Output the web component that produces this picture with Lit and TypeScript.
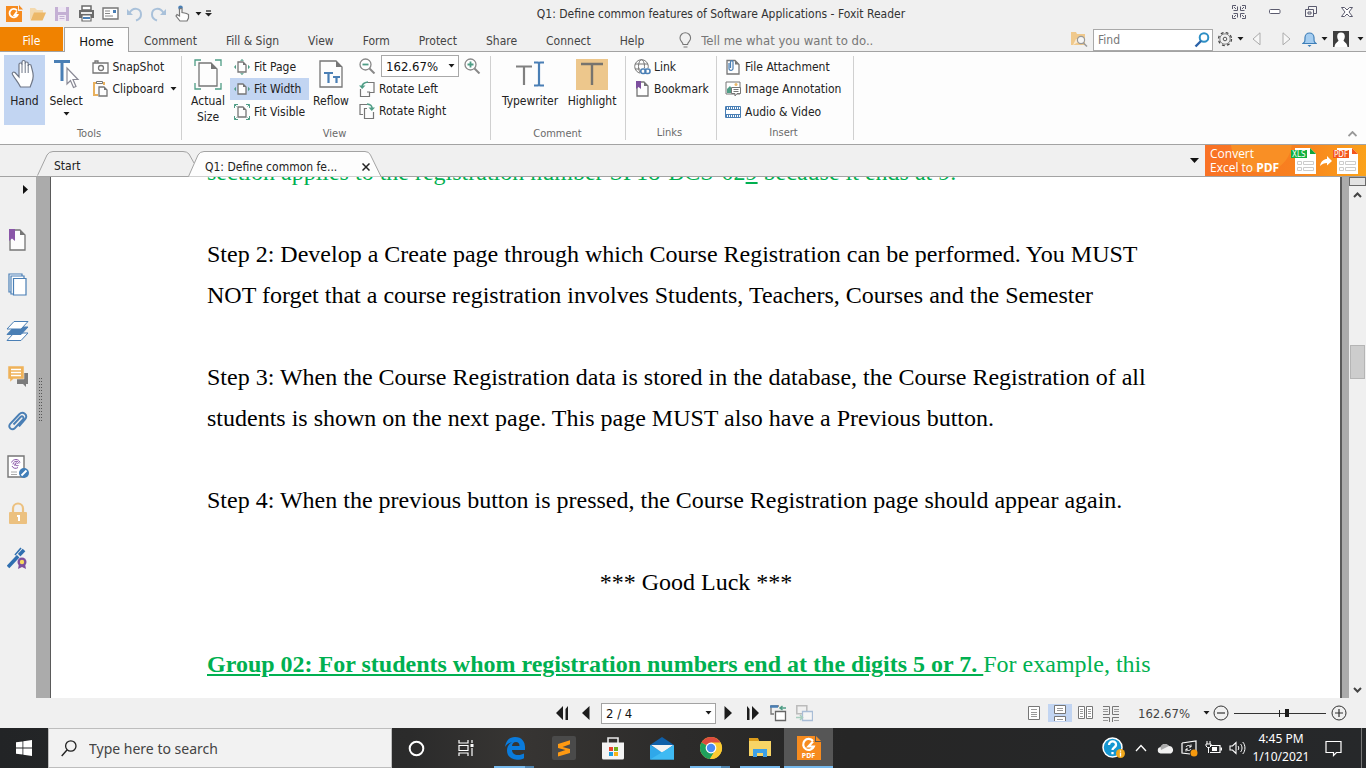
import { LitElement, html, svg, css, nothing } from "lit";
import type { TemplateResult } from "lit";
import { customElement, property } from "lit/decorators.js";
import { classMap } from "lit/directives/class-map.js";

type Icon = { w: number; h: number; body: unknown };
const icon = (w: number, h: number, body: unknown): Icon => ({ w, h, body });
const draw = (i: Icon): TemplateResult =>
  html`<svg width=${i.w} height=${i.h} viewBox="0 0 ${i.w} ${i.h}" fill="none" aria-hidden="true">${i.body}</svg>`;

const G = "#767676";
const B = "#4a7fb5";
const T = "#4f9d86";

const sheet = (x: number, y: number, w: number, h: number, f: number) => svg`
  <path d="M${x} ${y}h${w - f}l${f} ${f}v${h - f}h${-w}z" fill="#fdfdfd" stroke="${G}" stroke-width="1.3"/>
  <path d="M${x + w - f} ${y}v${f}h${f}z" fill="${G}"/>`;

const caret = icon(7, 4, svg`<path d="M.5 0h6L3.500 3.500z" fill="#1b1b1b"/>`);
const caretBig = icon(9, 5, svg`<path d="M0 0h9L4.500 5z" fill="#111"/>`);

const I = {
  foxit: icon(18, 18, svg`<path d="M1 1h12v5h4v11H1z" fill="#f68b1f"/><path d="M14 0l4 4.500h-4z" fill="#f68b1f"/><path d="M12 5.500A4.200 4.200 0 1 0 12.500 10H9.500L12 6.500" stroke="#fff" stroke-width="1.800"/>`),
  open: icon(18, 16, svg`<path d="M1 14V2h5l2 2h6v3H6z" fill="#f3d9ae"/><path d="M1.500 14.500L5 6.500h12l-3.500 8z" fill="#ecb868"/>`),
  save: icon(16, 16, svg`<path d="M1 1h14v14H1z" fill="#c4b0d4"/><path d="M4 1h8v5H4z" fill="#eee8f3"/><path d="M4 9h8v6H4z" fill="#eee8f3"/><path d="M5.500 10.500h5M5.500 12.500h5" stroke="#c4b0d4"/>`),
  print: icon(17, 17, svg`<path d="M4 1h9v4H4z" stroke="#6b6b6b" stroke-width="1.500" fill="#fff"/><path d="M1 5h15v8H1z" fill="#6b6b6b"/><path d="M3 7h11v2H3z" fill="#eaeaea"/><path d="M4 10h9v6H4z" fill="#fff" stroke="#6b6b6b" stroke-width="1.200"/><path d="M5 12h7v2H5z" fill="${B}"/>`),
  mail: icon(17, 13, svg`<path d="M1 1h15v11H1z" fill="#fff" stroke="#777" stroke-width="1.400"/><path d="M3 4h5M3 6.500h5M3 9h8" stroke="#888"/><path d="M11 3h3v3h-3z" fill="${B}"/>`),
  undo: icon(17, 16, svg`<path d="M3.500 7C7 .5 15 2 15 8.500c0 3-2 5-5 6" stroke="#a9c1da" stroke-width="2"/><path d="M1 3v6h6z" fill="#a9c1da"/>`),
  redo: icon(17, 16, svg`<path d="M13.500 7C10 .5 2 2 2 8.500c0 3 2 5 5 6" stroke="#a9c1da" stroke-width="2"/><path d="M16 3v6h-6z" fill="#a9c1da"/>`),
  touch: icon(15, 17, svg`<circle cx="5.500" cy="2.800" r="2.300" fill="${B}"/><path d="M4.500 4v7L2 9.500 1 11l4 5h7l1.500-3V9.500l-2-1-2-.5-2.500-.5V4c-.5-1-1.500-1-2 0z" fill="#fff" stroke="#777" stroke-width="1.200"/>`),
  qat: icon(7, 7, svg`<path d="M1 1h5" stroke="#222" stroke-width="1.300"/><path d="M0 3h7L3.500 6.500z" fill="#222"/>`),
  full: icon(14, 14, svg`<g stroke="#5b5b6e"><path d="M5.500 1.500v4h-4M8.500 1.500v4h4M5.500 12.500v-4h-4M8.500 12.500v-4h4M.5 4V.5H4M10 .5h3.500V4M.5 10v3.500H4M13.500 10v3.500H10"/><path d="M2 2l2 2M12 2l-2 2M2 12l2-2M12 12l-2-2"/></g>`),
  min: icon(12, 6, svg`<rect x=".5" y=".5" width="10.500" height="4" rx="1" stroke="#5b5b6e" fill="#fff"/>`),
  restore: icon(12, 12, svg`<g stroke="#5b5b6e" fill="#f4f4f4"><path d="M3.500 3V.5h8v7H9"/><path d="M.5 3.500h8v7h-8z"/><path d="M3 6h3v2H3z"/></g>`),
  close: icon(12, 10, svg`<path d="M.5.5h3L6 3 8.500.5h3L8 5l3.500 4.500h-3L6 7 3.500 9.500h-3L4 5z" stroke="#5b5b6e" fill="#fff"/>`),
  bulb: icon(13, 17, svg`<path d="M4 12.500c0-2.500-3-3-3-6.500a5.300 5.300 0 0 1 10.600 0c0 3.500-3 4-3 6.500zM4.500 15h4" stroke="#777" stroke-width="1.100"/>`),
  folderFind: icon(17, 16, svg`<path d="M0 14V1h5l1 2h8v11z" fill="#f0c98c"/><path d="M2 14l3-6h8" fill="#fbead0"/><circle cx="10" cy="9" r="3.600" fill="#f5f5f5" stroke="#999" stroke-width="1.200"/><path d="M12.500 12l3.500 3.500" stroke="#999" stroke-width="1.500"/>`),
  find: icon(16, 16, svg`<circle cx="10" cy="5.500" r="4.300" stroke="#2e8fc5" stroke-width="2"/><path d="M7 9L1.500 14.500" stroke="#2a62a8" stroke-width="2.400"/>`),
  gear: icon(16, 16, svg`<circle cx="8" cy="8" r="6.500" stroke="#444" stroke-width="1.300" stroke-dasharray="2.800 2.300"/><circle cx="8" cy="8" r="5.200" stroke="#666" stroke-width=".8"/><circle cx="8" cy="8" r="1.800" stroke="#555"/>`),
  prev: icon(9, 14, svg`<path d="M8 .8v12L1 7z" stroke="#ababab" fill="#f7f7f7"/>`),
  next: icon(9, 14, svg`<path d="M1 .8v12L8 7z" stroke="#ababab" fill="#f7f7f7"/>`),
  bell: icon(15, 16, svg`<path d="M1 12.500c2-1.500 2-2 2-6a4.500 4.500 0 0 1 9 0c0 4 0 4.500 2 6z" fill="#a5cdf0" stroke="#3f7fb8" stroke-width="1.200"/><path d="M5.500 14h4L7.500 16z" fill="#3f7fb8"/>`),
  user: icon(16, 16, svg`<path d="M0 0h16v16H0z" fill="#3f3f3f"/><path d="M8 1.500c2.500 0 3.800 1.600 3.800 4 0 2-.8 3-1.300 4 .3 1.500 3.500 2 4 6.500H1.500c.5-4.500 3.700-5 4-6.500-.5-1-1.300-2-1.300-4 0-2.400 1.300-4 3.800-4z" fill="#fff"/>`),
  hand: icon(26, 30, svg`<path d="M8 18V5.500c0-2 3-2 3 0V3c0-2 3.200-2 3.200 0v1.500c0-2 3-2 3 0V7c0-2 3-2 3 0 .6 3 2 6 2 10 0 5-2 7-3 11H9.500C7 23 4 20 1.500 15.500c-1-2 1-3 2.500-2z" fill="#fff" stroke="#6f7787" stroke-width="1.200"/><path d="M11 5v9M14.200 4v10M17.200 6v8" stroke="#6f7787"/>`),
  select: icon(28, 30, svg`<path d="M2 2.500h16M10 3v19" stroke="${B}" stroke-width="3"/><path d="M15 9v16l3.500-3.500 3 7 2.500-1-3-7h5z" fill="#fff" stroke="#8a8a96" stroke-width="1.200"/>`),
  camera: icon(17, 14, svg`<path d="M1 3h15v10H1zM3 1h3v2H3z" stroke="${G}" stroke-width="1.300" fill="#fff"/><circle cx="9" cy="8" r="2.500" stroke="${G}" stroke-width="1.300"/>`),
  clip: icon(15, 17, svg`<path d="M5 15H1V3h10v2" stroke="#e9b15e" stroke-width="2"/><path d="M3.500 3.500v-2h6v2z" fill="#fff" stroke="${G}"/>${sheet(6, 7, 8, 9, 3)}`),
  actual: icon(28, 31, svg`${sheet(5, 4, 18, 23, 6)}<path d="M1 7V1h6M21 1h6v6M27 24v6h-6M7 30H1v-6" stroke="${T}" stroke-width="1.300"/>`),
  fitPage: icon(16, 16, svg`${sheet(4, 3, 8, 10, 3)}<path d="M8 0l2 1.800H6zM8 16l2-1.800H6zM0 8l2-2.200v4.400zM16 8l-2-2.200v4.400z" fill="${T}"/>`),
  fitWidth: icon(16, 16, svg`${sheet(4, 3, 8, 10, 3)}<path d="M0 8l2-2.200v4.400zM16 8l-2-2.200v4.400z" fill="${T}"/>`),
  fitVis: icon(16, 16, svg`${sheet(4, 3, 8, 10, 3)}<path d="M.5 4V.5H4M.5.5l2 2M12 .5h3.500V4M15.500.5l-2 2M.5 12v3.500H4M.5 15.500l2-2M12 15.500h3.500V12M15.500 15.500l-2-2" stroke="${T}"/>`),
  reflow: icon(24, 29, svg`${sheet(1, 1, 22, 26, 6)}<path d="M5 13h9M9.500 13v10M14 17h7M17.500 17v6" stroke="${B}" stroke-width="2.200"/>`),
  zoomOut: icon(17, 16, svg`<circle cx="6.500" cy="6.500" r="5.500" stroke="#888" stroke-width="1.300" fill="#fff"/><path d="M10.500 10.500l5 5" stroke="#888" stroke-width="2"/><path d="M3.500 6.500h6" stroke="${T}" stroke-width="1.800"/>`),
  zoomIn: icon(17, 16, svg`<circle cx="6.500" cy="6.500" r="5.500" stroke="#888" stroke-width="1.300" fill="#fff"/><path d="M10.500 10.500l5 5" stroke="#888" stroke-width="2"/><path d="M3.500 6.500h6M6.500 3.500v6" stroke="${T}" stroke-width="1.800"/>`),
  rotL: icon(16, 16, svg`<path d="M8 1.500h7v10h-4" stroke="${G}" stroke-width="1.200"/><path d="M1.500 8v7.500h9V11H8" stroke="${G}" stroke-width="1.200"/><path d="M9 1C5 1.500 3 3 3 6" stroke="${T}" stroke-width="1.500"/><path d="M0 4.500h6.500L3.200 8z" fill="${T}"/>`),
  rotR: icon(16, 16, svg`<path d="M8 1.500H1v10h3" stroke="${G}" stroke-width="1.200"/><path d="M14.500 9v6.500h-9V5.500H8" stroke="${G}" stroke-width="1.200"/><path d="M8 1c4 .5 5 2 5 4" stroke="${T}" stroke-width="1.500"/><path d="M9.500 4.500H16L12.800 8z" fill="${T}"/>`),
  typewriter: icon(30, 30, svg`<path d="M1 7.500h16M9 7.500V26" stroke="#808080" stroke-width="2.200"/><path d="M19 3.500h4l1 1 1-1h4M19 26.500h4l1-1 1 1h4M24 4v22" stroke="${B}" stroke-width="2.200"/>`),
  highlight: icon(32, 31, svg`<path d="M0 0h32v31H0z" fill="#edc78c"/><path d="M5 5h22M16 5v21" stroke="#77746e" stroke-width="2.400"/>`),
  link: icon(17, 16, svg`<circle cx="7.500" cy="7.500" r="6.800" stroke="${G}"/><ellipse cx="7.500" cy="7.500" rx="3" ry="6.800" stroke="${G}"/><path d="M1 5h13M1 10h13" stroke="${G}"/><path d="M6 9h11v7H6z" fill="#fdfdfd"/><rect x="6.800" y="10" width="5" height="4.500" rx="2" stroke="${B}" stroke-width="1.600"/><rect x="11" y="10" width="5" height="4.500" rx="2" stroke="${B}" stroke-width="1.600"/>`),
  bookmark: icon(14, 16, svg`${sheet(2, 1, 11, 14, 4)}<path d="M1 0h5v8L3.500 6 1 8z" fill="#7d4f9e"/>`),
  attach: icon(14, 16, svg`${sheet(1, 1.500, 12, 13.500, 4)}<path d="M3 4v5.500c0 2.500 4 2.500 4 0V3c0-1.800-2.500-1.800-2.500 0v6" stroke="${B}" stroke-width="1.200"/>`),
  imgAnn: icon(16, 16, svg`<path d="M1 1h14v12H1z" stroke="${G}" fill="#fff"/><path d="M2 12V8l3-3 2 3v4z" fill="${T}"/><circle cx="11" cy="3.500" r="1.500" fill="#ecb868"/><path d="M6.500 6.500h9v6H12l-2 2.500v-2.500H6.500z" fill="#fff" stroke="${G}"/><path d="M8.500 8.500h5M8.500 10.500h5" stroke="${G}"/>`),
  film: icon(16, 12, svg`<path d="M.5.5h15v11H.5z" fill="#fff" stroke="${B}"/><path d="M1 2h14M1 10h14" stroke="${B}" stroke-width="2" stroke-dasharray="1 1"/><path d="M.5 3.500h15M.5 8.500h15" stroke="${B}"/>`),
  collapse: icon(9, 6, svg`<path d="M.5 5l4-4 4 4" stroke="#999" stroke-width="1.800"/>`),
  x: icon(8, 8, svg`<path d="M.5.5l7 7M7.500.5l-7 7" stroke="#222" stroke-width="1.500"/>`),
  expand: icon(5, 9, svg`<path d="M0 0v9l5-4.500z" fill="#111"/>`),
  sBook: icon(20, 24, svg`${sheet(2, 2, 15, 20, 5)}<path d="M1 1h6v12l-3-2.500L1 13z" fill="#8a56a8"/>`),
  sPages: icon(20, 24, svg`<g fill="#fff" stroke="${B}" stroke-width="1.200"><path d="M1 1h13v18H1z"/><path d="M3 3h13v18H3z"/><path d="M5.500 5.500h12.500v16.500H5.500z"/></g>`),
  sLayers: icon(24, 22, svg`<g stroke="${B}"><path d="M8 13h14l-7 7.500H1z" fill="#fff"/><path d="M8 7h14l-7 7.500H1z" fill="${B}"/><path d="M8 1.500h14L15 9H1z" fill="#fff"/></g>`),
  sComment: icon(22, 22, svg`<path d="M10 8h11v11h-2v3l-3-3h-6z" fill="#7b7b7b"/><path d="M1 1h16v13H6.500L3 17v-3H1z" fill="#efb259" stroke="#efefef" stroke-width=".5"/><path d="M4 4.500h10M4 7.500h10M4 10.500h10" stroke="#fff" stroke-width="1.300"/>`),
  sClip: icon(22, 22, svg`<path d="M6.500 13.500l7-7.500c2-1.800 4 .5 2.500 2.300L8 17c-3 3-7.500-.5-4.800-4.200L12 3.500c4-4 9.500.5 6 5L12 15.500" stroke="${B}" stroke-width="1.900"/>`),
  sSign: icon(24, 24, svg`<path d="M2 1h16v21H2z" fill="#fff" stroke="${G}" stroke-width="1.400"/><path d="M5.500 7.500C7 3.500 13 3.500 14 7.500M7 9.500c0-4 6-4 6-1M9 11c-1-3.500 2.500-4 2.500-2M6 11c1 2.500 4 3 6 1.500M9.500 9c0 1.500 1 2 3 1.500" stroke="#8a56a8"/><path d="M5 17h6M5 19.500h6" stroke="#aaa"/><circle cx="18" cy="18" r="5" fill="#3f7db8"/><path d="M15.500 20.500l5-5" stroke="#fff" stroke-width="2"/>`),
  sLock: icon(20, 24, svg`<path d="M5 11V7.500a5 5 0 0 1 10 0V11" stroke="#ecc180" stroke-width="2.200"/><rect x="1" y="11" width="18" height="12" rx="1" fill="#ecc180"/><path d="M9 14h3v6h-2v-4H9z" fill="#fff"/>`),
  sPen: icon(22, 23, svg`<path d="M1 20L17 3" stroke="#2f6fb0" stroke-width="3.600"/><path d="M8 8l6-7" stroke="#2f6fb0" stroke-width="1.600"/><path d="M10 7l5 5" stroke="#efefef" stroke-width="1.500"/><path d="M12 17l-1 5 4-2 4 2-1-5z" fill="#7d4f9e"/><circle cx="15" cy="15" r="4.500" fill="#7d4f9e"/><circle cx="15" cy="15" r="2.200" fill="#f6d860"/>`),
  up: icon(9, 6, svg`<path d="M1 5l3.500-3.500L8 5" stroke="#444" stroke-width="2"/>`),
  down: icon(9, 6, svg`<path d="M1 1l3.500 3.500L8 1" stroke="#444" stroke-width="2"/>`),
  first: icon(13, 14, svg`<path d="M7 0v14L0 7zM12 0v14H9.500V3z" fill="#1c1c1c"/>`),
  back: icon(8, 14, svg`<path d="M7.500 0v14L0 7z" fill="#1c1c1c"/>`),
  fwd: icon(8, 14, svg`<path d="M.5 0v14L8 7z" fill="#1c1c1c"/>`),
  last: icon(13, 14, svg`<path d="M6 0v14l7-7zM1 0v14h2.500V3z" fill="#1c1c1c"/>`),
  viewPrev: icon(17, 17, svg`<path d="M1 1h8M1 1v8h3" stroke="${G}" stroke-width="1.300"/><path d="M0 1.500h8" stroke="${B}" stroke-width="2.500"/><path d="M5.500 6.500h10v9h-10z" fill="#fff" stroke="#666" stroke-width="1.300"/><path d="M16 3h-5M12.500 1L10 3l2.500 2" stroke="${T}" stroke-width="1.500"/>`),
  viewNext: icon(17, 17, svg`<path d="M.8.8h10v8h-10z" stroke="#bbb" stroke-width="1.500"/><path d="M6.500 6.500h10v9h-10z" fill="#f5f5f5" stroke="#a9bdd6" stroke-width="1.300"/><path d="M0 12.500h6M4 10l2.500 2.500L4 15" stroke="#a7cdbf" stroke-width="1.500"/>`),
  single: icon(12, 16, svg`<path d="M.5 1.500h11v13H.5z" fill="#fff" stroke="${G}"/><path d="M3 4.500h6M3 7.500h6M3 9.500h6M3 11.500h6" stroke="#999"/>`),
  cont: icon(12, 18, svg`<path d="M.5 1.500h11v8H.5zM.5 17v-4.500h11V17" fill="#fff" stroke="${G}"/><path d="M3 4.500h6M3 6.500h6M3 15.500h6" stroke="#999"/>`),
  facing: icon(16, 16, svg`<path d="M.5 1.500h6v12h-6zM8.500 1.500h6v12h-6z" fill="#fff" stroke="${G}"/><path d="M2 4.500h3M2 6.500h3M2 8.500h3M2 11.500h3M10 4.500h3M10 6.500h3M10 8.500h3M10 11.500h3" stroke="#999"/>`),
  contFacing: icon(17, 17, svg`<path d="M0 1.500h6.500v8H0M16 1.500H9.500v8H16M0 12.500h6.500V17M16 12.500H9.500V17" stroke="${G}"/><path d="M0 4.500h5M0 6.500h5M11 4.500h5M11 6.500h5M0 15.500h5M11 15.500h5" stroke="#999"/>`),
  minus: icon(16, 16, svg`<circle cx="8" cy="8" r="7" stroke="#333"/><path d="M4 8h8" stroke="#333" stroke-width="1.200"/>`),
  plus: icon(16, 16, svg`<circle cx="8" cy="8" r="7" stroke="#333"/><path d="M4 8h8M8 4v8" stroke="#333" stroke-width="1.200"/>`),
  win: icon(16, 16, svg`<path d="M0 2.300l6.500-.9v6.200H0zM7.300 1.200L16 0v7.600H7.300zM0 8.400h6.500v6.200L0 13.700zM7.300 8.400H16V16l-8.700-1.200z" fill="#fff"/>`),
  search: icon(16, 17, svg`<circle cx="9.800" cy="6" r="5.200" stroke="#222" stroke-width="1.300"/><path d="M6 10L.7 16" stroke="#222" stroke-width="1.400"/>`),
  cortana: icon(17, 17, svg`<circle cx="8.500" cy="8.500" r="6.800" stroke="#fff" stroke-width="2"/>`),
  task: icon(16, 16, svg`<path d="M1 0v3h9V0M1 16v-3h9v3M1 5.500h9v5H1zM14 0v3M14 8v8" stroke="#fff" stroke-width="1.200"/><path d="M12.500 4h3v3h-3z" fill="#fff"/>`),
  edge: icon(22, 24, svg`<path d="M1 11C2 4 6 1 11 1c7 0 10 5 10 10v3H8c.3 3.500 2.500 5 6 5 2.500 0 4.500-.6 6-1.500v4.700c-2 1-4.500 1.500-7 1.500C7 23.700 3 20 3 14.500c0-4 2-7 5.500-8.500C5 6.500 2.500 8.500 1 11zm7-1h7.500c0-2.700-1.300-4-3.500-4S8.300 7.500 8 10z" fill="#0a7bdc" fill-rule="evenodd"/>`),
  sublime: icon(24, 24, svg`<rect width="24" height="24" rx="2" fill="#4a4a4a"/><path d="M6 8l12-3.700v4L10.500 11 18 13v4L6 20.500v-4l7.500-2.400L6 12z" fill="#ff9a12"/>`),
  store: icon(24, 24, svg`<path d="M7 7V2h10v5" stroke="#e8e8e8" stroke-width="1.600"/><path d="M1 6.500h22V22q0 1.500-1.500 1.500h-19Q1 23.500 1 22z" fill="#f4f4f4"/><path d="M8 11h4v4H8z" fill="#e8432d"/><path d="M13 11h4v4h-4z" fill="#72ae1a"/><path d="M8 16h4v4H8z" fill="#1c9ede"/><path d="M13 16h4v4h-4z" fill="#f7b416"/>`),
  mailApp: icon(24, 23, svg`<path d="M12 0l12 8v14H0V8z" fill="#0f5fa8"/><path d="M0 8l12 7 12-7v14.500H0z" fill="#2fa8ea"/><path d="M1 8h22l-11 7.500z" fill="#f3f3f3"/><path d="M0 22.500L24 8v14.500z" fill="#3fbaf3"/><path d="M12 15.300L23 8l-4 0z" fill="#f3f3f3"/>`),
  chrome: icon(24, 24, svg`<circle cx="12" cy="12" r="11" fill="#f9cb2d"/><path d="M12 12L2.470 6.500A11 11 0 0 1 21.500 6.500z" fill="#dd4b3e"/><path d="M12 12L2.470 6.500A11 11 0 0 0 11 23l5.500-9z" fill="#1fa15d"/><path d="M12 6.500h9.500A11 11 0 0 1 11 23l5-8.500z" fill="#fbca32"/><circle cx="12" cy="12" r="5.400" fill="#fff"/><circle cx="12" cy="12" r="4.200" fill="#4a8bf5"/>`),
  explorer: icon(22, 20, svg`<path d="M0 1h9l1 2h12v15H0z" fill="#f8d465"/><path d="M0 0h9l1 3H0z" fill="#dd9d1b"/><path d="M4 19v-8h14v8h-4v-4H8v4z" fill="#3ea0e6"/>`),
  foxitBig: icon(24, 24, svg`<path d="M0 0h18v6h6v18H0z" fill="#f68b1f"/><path d="M19 0l5 5h-5z" fill="#f68b1f"/><path d="M16 5A5.500 5.500 0 1 0 16.800 10.500H11.500L16 5.500" stroke="#fff" stroke-width="2.200"/>`),
  help: icon(24, 22, svg`<circle cx="10.500" cy="10.500" r="9.500" fill="#1596d1" stroke="#fff" stroke-width="1.500"/><path d="M7 8c0-5 7.500-4.500 7 0-.3 2.500-3.500 2.500-3.500 5M10.500 15v2.200" stroke="#fff" stroke-width="2.300"/><circle cx="18.500" cy="16.500" r="4.500" fill="#f0a81c"/><path d="M18.500 13.500v1.200M18.500 15.500v4" stroke="#fff" stroke-width="1.300"/>`),
  chevron: icon(12, 8, svg`<path d="M1 7l5-5.500L11 7" stroke="#fff" stroke-width="1.300"/>`),
  cloud: icon(17, 11, svg`<path d="M3.500 10.500a3.300 3.300 0 0 1 0-6.500A5 5 0 0 1 12 3a4 4 0 0 1 2 7.500z" fill="#f0f0f0"/><path d="M3.500 4A5 5 0 0 1 12 3L4 7z" fill="#aaa"/>`),
  sync: icon(17, 17, svg`<path d="M1 3l14-2v11M1 3v10l8 1" stroke="#fff" stroke-width="1.200"/><path d="M5 7c1-2 4-2 5 0M10 9c-1 2-4 2-5 0M10 4.500V7H8M5 11.500V9h2" stroke="#fff"/><circle cx="13" cy="13" r="3.500" fill="#f79a0e"/>`),
  battery: icon(17, 14, svg`<path d="M5 4.500h10v7H5" stroke="#fff" stroke-width="1.200"/><path d="M7 6h5v4H7zM15.500 6.500H17v3h-1.500z" fill="#fff"/><path d="M2 0v3M5 0v3M1 3h5v2L4.500 6.500h-2L1 5zM3.500 6v6" stroke="#fff"/>`),
  volume: icon(17, 14, svg`<path d="M1 5h2.500L7 1.500v11L3.500 9H1z" stroke="#fff" stroke-width="1.100"/><path d="M9 5c1 1 1 3 0 4M11.500 3c2 2 2 6 0 8M13.700 1c3 3 3 9 0 12" stroke="#fff"/>`),
  note: icon(17, 17, svg`<path d="M1 1.500h15v11h-4.500l-3 3v-3H1z" stroke="#fff" stroke-width="1.200"/>`),
};

const reset = css`
  :host { display: block; font-family: "DejaVu Sans Condensed", "Noto Sans", sans-serif; }
  * { box-sizing: border-box; }
  button, input, select {
    font: inherit; color: inherit; margin: 0; padding: 0; border: 0; background: none;
    border-radius: 0; appearance: none; outline: none;
  }
  button { display: inline-flex; align-items: center; justify-content: center; white-space: nowrap; }
  svg { display: block; flex: none; }
`;

@customElement("ribbon-button")
class RibbonButton extends LitElement {
  @property() label = "";
  @property({ attribute: false }) glyph?: Icon;
  @property({ type: Boolean }) large = false;
  @property({ type: Boolean }) active = false;
  @property({ type: Boolean }) menu = false;
  static styles = [reset, css`
    button { font-size: 12px; line-height: 16px; color: #222; }
    .small { height: 22px; width: 100%; padding: 1px 4px 0; gap: 4px; justify-content: flex-start; }
    .small .glyph { width: 16px; display: flex; justify-content: center; }
    .small .more { padding-left: 2px; }
    .large { height: 70px; width: 100%; flex-direction: column; justify-content: flex-start; padding-top: 3px; }
    .large .glyph { height: 35px; display: flex; align-items: center; padding-bottom: 3px; }
    .large .more { padding-top: 3px; }
    .label { white-space: pre; text-align: center; }
    .active { background: #c2d5f2; }
  `];
  render() {
    return html`<button class=${classMap({ small: !this.large, large: this.large, active: this.active })}>
      <span class="glyph">${this.glyph ? draw(this.glyph) : nothing}</span>
      <span class="label">${this.label}</span>
      ${this.menu ? html`<span class="more">${draw(caret)}</span>` : nothing}
    </button>`;
  }
}

@customElement("app-titlebar")
class TitleBar extends LitElement {
  static styles = [reset, css`
    .bar { display: grid; grid-template-columns: 1fr auto 1fr; height: 27px; align-items: center; background: #f0f0f0; font-size: 12px; color: #333; }
    .quick { display: flex; padding-left: 2px; }
    .quick button { width: 24px; height: 26px; }
    .quick .narrow { width: 12px; }
    .quick .menu { width: 8px; }
    .window { display: flex; justify-content: flex-end; padding: 0 1px 3px 0; }
    .window button { width: 36px; height: 24px; }
    .title { padding-left: 76px; white-space: nowrap; }
  `];
  render() {
    const quick: [string, Icon][] = [["Foxit Reader", I.foxit], ["Open", I.open], ["Save", I.save], ["Print", I.print], ["Email", I.mail], ["Undo", I.undo], ["Redo", I.redo], ["Touch mode", I.touch]];
    const win: [string, Icon][] = [["Full screen", I.full], ["Minimize", I.min], ["Restore", I.restore], ["Close", I.close]];
    return html`<header class="bar">
      <div class="quick">
        ${quick.map(([n, i]) => html`<button aria-label=${n}>${draw(i)}</button>`)}
        <button class="menu" aria-label="Touch options">${draw(caret)}</button>
        <button class="narrow" aria-label="Customize toolbar">${draw(I.qat)}</button>
      </div>
      <div class="title">Q1: Define common features of Software Applications - Foxit Reader</div>
      <div class="window">${win.map(([n, i]) => html`<button aria-label=${n}>${draw(i)}</button>`)}</div>
    </header>`;
  }
}

@customElement("app-menubar")
class MenuBar extends LitElement {
  static styles = [reset, css`
    .bar { display: flex; height: 25px; background: #f0f0f0; border-bottom: 1px solid #a3a3a3; font-size: 12px; color: #444; }
    .tabs { display: flex; gap: 1px; }
    .tab { padding: 3px 14px 0; height: 24px; }
    .file { width: 63px; padding: 3px 0 0; background: #f08200; color: #fff; }
    .home { width: 65px; padding: 3px 0 0; height: 25px; background: #fdfdfd; border: 1px solid #a3a3a3; border-bottom: 0; color: #111; font-size: 13px; }
    .tell { display: flex; align-items: center; gap: 9px; padding: 2px 0 0 21px; flex: 1; font-size: 13px; }
    .tell input { flex: 1; min-width: 0; color: #777; }
    ::placeholder { color: #777; opacity: 1; }
    .tools { display: flex; align-items: center; padding-right: 1px; }
    .search { display: flex; align-items: center; width: 120px; height: 22px; margin: 1px 4px 0 6px; padding: 0 2px 0 4px; border: 1px solid #a9a9a9; background: #fff; }
    .search input { flex: 1; min-width: 0; }
    .cell { width: 16px; height: 22px; margin-right: 2px; }
    .folder { margin-right: 0; }
    .caret { width: 10px; height: 22px; }
    .prev { width: 28px; height: 22px; justify-content: flex-start; padding-left: 7px; }
    .next { width: 26px; height: 22px; }
    .bell { width: 20px; height: 22px; }
    .user { margin: 0 6px 0 4px; }
  `];
  render() {
    return html`<nav class="bar">
      <div class="tabs">
        <button class="tab file">File</button>
        <button class="tab home">Home</button>
        ${["Comment", "Fill & Sign", "View", "Form", "Protect", "Share", "Connect", "Help"].map((t) => html`<button class="tab">${t}</button>`)}
      </div>
      <label class="tell">${draw(I.bulb)}<input aria-label="Tell me" placeholder="Tell me what you want to do.." /></label>
      <div class="tools">
        <button class="cell folder" aria-label="Search in folder">${draw(I.folderFind)}</button>
        <label class="search"><input aria-label="Find" placeholder="Find" />${draw(I.find)}</label>
        <button class="cell" aria-label="Settings">${draw(I.gear)}</button>
        <button class="caret" aria-label="Settings menu">${draw(caret)}</button>
        <button class="prev" aria-label="Previous result">${draw(I.prev)}</button>
        <button class="next" aria-label="Next result">${draw(I.next)}</button>
        <button class="bell" aria-label="Notifications">${draw(I.bell)}</button>
        <button class="caret" aria-label="Notification menu">${draw(caret)}</button>
        <button class="cell user" aria-label="Account">${draw(I.user)}</button>
        <button class="caret" aria-label="Account menu">${draw(caret)}</button>
      </div>
    </nav>`;
  }
}

@customElement("app-ribbon")
class Ribbon extends LitElement {
  static styles = [reset, css`
    .ribbon { display: flex; height: 93px; background: #fdfdfd; border-bottom: 1px solid #a3a3a3; font-size: 12px; }
    .group { display: flex; flex-direction: column; margin: 4px 0; border-right: 1px solid #d0d0d0; }
    .body { display: flex; height: 70px; margin-top: -1px; }
    .name { text-align: center; font-size: 11px; line-height: 14px; color: #6a6a6a; padding-top: 2px; margin: 0 0 0 -7px; font-weight: normal; }
    .g-tools { width: 182px; padding-left: 4px; }
    .g-view { width: 309px; padding-left: 4px; }
    .g-comment { width: 135px; padding-left: 6px; }
    .g-links { width: 91px; padding-left: 4px; }
    .g-insert { width: 137px; padding-left: 4px; }
    .w42 { width: 42px; } .w44 { width: 44px; } .w58 { width: 58px; } .w66 { width: 66px; }
    .fit { width: 79px; }
    .clips { padding-left: 1px; }
    .zoomcol { padding-left: 2px; }
    .zoom { display: flex; height: 22px; align-items: center; gap: 5px; padding-left: 4px; }
    .combo { display: grid; width: 78px; height: 22px; border: 1px solid #a9a9a9; background: #fff; align-items: center; }
    .combo > * { grid-area: 1 / 1; }
    .combo select { padding-left: 4px; width: 76px; height: 20px; color: #111; font-size: 13px; }
    .combo svg { justify-self: end; margin-right: 3px; pointer-events: none; }
    .end { flex: 1; display: flex; justify-content: flex-end; align-items: flex-end; padding: 0 9px 7px 0; }
  `];
  render() {
    const small = (label: string, glyph: Icon, active = false, menu = false) =>
      html`<ribbon-button .label=${label} .glyph=${glyph} ?active=${active} ?menu=${menu}></ribbon-button>`;
    const large = (cls: string, label: string, glyph: Icon, active = false, menu = false) =>
      html`<ribbon-button class=${cls} large .label=${label} .glyph=${glyph} ?active=${active} ?menu=${menu}></ribbon-button>`;
    return html`<section class="ribbon">
      <div class="group g-tools">
        <div class="body">
          ${large("w42", "Hand", I.hand, true)}${large("w44", "Select", I.select, false, true)}
          <div class="clips">${small("SnapShot", I.camera)}${small("Clipboard", I.clip, false, true)}</div>
        </div><h2 class="name">Tools</h2>
      </div>
      <div class="group g-view">
        <div class="body">
          ${large("w44", "Actual\nSize", I.actual)}
          <div class="fit">${small("Fit Page", I.fitPage)}${small("Fit Width", I.fitWidth, true)}${small("Fit Visible", I.fitVis)}</div>
          ${large("w44", "Reflow", I.reflow)}
          <div class="zoomcol">
            <div class="zoom">
              <button aria-label="Zoom out">${draw(I.zoomOut)}</button>
              <div class="combo"><select aria-label="Zoom level"><option>162.67%</option></select>${draw(caret)}</div>
              <button aria-label="Zoom in">${draw(I.zoomIn)}</button>
            </div>
            ${small("Rotate Left", I.rotL)}${small("Rotate Right", I.rotR)}
          </div>
        </div><h2 class="name">View</h2>
      </div>
      <div class="group g-comment">
        <div class="body">${large("w66", "Typewriter", I.typewriter)}${large("w58", "Highlight", I.highlight)}</div>
        <h2 class="name">Comment</h2>
      </div>
      <div class="group g-links">
        <div class="body"><div>${small("Link", I.link)}${small("Bookmark", I.bookmark)}</div></div>
        <h2 class="name">Links</h2>
      </div>
      <div class="group g-insert">
        <div class="body"><div>${small("File Attachment", I.attach)}${small("Image Annotation", I.imgAnn)}${small("Audio & Video", I.film)}</div></div>
        <h2 class="name">Insert</h2>
      </div>
      <div class="end"><button aria-label="Collapse ribbon">${draw(I.collapse)}</button></div>
    </section>`;
  }
}

@customElement("app-doctabs")
class DocTabs extends LitElement {
  static styles = [reset, css`
    .strip { display: flex; height: 32px; align-items: flex-end; background: #f0f0f0; border-bottom: 1px solid #a3a3a3; font-size: 12px; color: #222; padding-left: 37px; }
    .tab { display: grid; align-items: center; }
    .tab > * { grid-area: 1 / 1; }
    .first { width: 151px; }
    .current { width: 194px; margin-bottom: -1px; z-index: 1; }
    .text { display: flex; align-items: center; justify-content: space-between; padding: 5px 12px 0 17px; white-space: nowrap; }
    .fill { flex: 1; }
    .drop { width: 22px; height: 31px; }
    .promo { display: flex; align-items: center; height: 31px; width: 161px; padding-left: 5px; gap: 10px; color: #fff; text-decoration: none;
      font-family: "Open Sans", sans-serif; font-size: 12px; line-height: 14px; white-space: nowrap;
      background: radial-gradient(circle at 35% -10%, #f98f25 0 30px, transparent 31px), linear-gradient(100deg, #f97126, #f8801f 55%, #fba31a); }
    .promo b { font-weight: 700; }
  `];
  render() {
    return html`<div class="strip">
      <div class="tab first">
        <svg width="160" height="25" viewBox="0 0 160 25" fill="none"><path d="M.5 24.500L10 4Q12 .5 16 .5H146Q150 .5 152 3L157 12" stroke="#a3a3a3"/></svg>
        <div class="text"><span>Start</span></div>
      </div>
      <div class="tab current">
        <svg width="194" height="26" viewBox="0 0 194 26"><path d="M.5 25.500L10 4Q12 .5 16 .5H177Q181 .5 182.500 4L193 25.500" fill="#fdfdfd" stroke="#a3a3a3"/></svg>
        <div class="text"><span>Q1: Define common fe...</span><button aria-label="Close tab">${draw(I.x)}</button></div>
      </div>
      <div class="fill"></div>
      <button class="drop" aria-label="Open documents">${draw(caretBig)}</button>
      <a class="promo" href="#convert"><span>Convert<br />Excel to <b>PDF</b></span>
        <svg width="72" height="29" viewBox="0 0 72 29" aria-hidden="true">
          <path d="M6 2h15l6 6v20H6z" fill="#fff"/><path d="M21 2l6 6h-6z" fill="#12a53c"/>
          <path d="M48 2h15l6 6v20H48z" fill="#fff"/><path d="M63 2l6 6h-6z" fill="#f4561d"/>
          <path d="M2 4h16v8H2z" fill="#12b03e"/><path d="M44 4h16v8H44z" fill="#f4561d"/>
          <g stroke="#ccc" fill="none"><path d="M8.500 15.500h4v3h-4zM14.500 15.500h10v3h-10zM8.500 21.500h4v3h-4zM14.500 21.500h10v3h-10zM50.500 15.500h4v3h-4zM56.500 15.500h10v3h-10zM50.500 21.500h4v3h-4zM56.500 21.500h10v3h-10z"/></g>
          <text x="3" y="11" font-size="8" font-family="DejaVu Sans Condensed" fill="#fff">XLS</text>
          <text x="45" y="11" font-size="8" font-family="DejaVu Sans Condensed" fill="#fff">PDF</text>
          <path d="M31 20c1-5 4-7 7-7v-3l5 5-5 4.500V17c-3 0-5 1-7 3z" fill="#fff"/>
        </svg>
      </a>
    </div>`;
  }
}

@customElement("app-document")
class DocumentView extends LitElement {
  static styles = [reset, css`
    :host { flex: 1; min-height: 0; display: flex; }
    .side { width: 36px; background: #f0f0f0; display: flex; flex-direction: column; }
    .toggle { width: 36px; height: 25px; padding-left: 14px; }
    .panel { display: grid; height: 364px; grid-template-rows: repeat(8, 1fr); margin-top: 15px; }
    .panel button { width: 36px; }
    .grip { width: 14px; background: #ababab; display: flex; align-items: center; padding: 0 0 75px 3px; }
    .page { flex: 1; min-width: 0; overflow: hidden; background: #fff; border: solid #5a5a5a; border-width: 0 2px 0 1px; padding: 0 155px 0 156px;
      display: flex; flex-direction: column; font-family: "Liberation Serif", serif; font-size: 24px; line-height: 41px; color: #000; white-space: nowrap; }
    p { margin: 0 0 41px; }
    .page p:first-child { margin-top: -25px; }
    .green { color: #00b050; }
    .center { text-align: center; }
    .gutter { width: 7px; background: #ababab; }
    .scroll { width: 17px; background: #f0f0f0; display: flex; flex-direction: column; align-items: center; }
    .split { width: 17px; height: 9px; border: 1px solid #6a6a6a; background: #e3e3e3; }
    .scroll button { width: 17px; height: 17px; }
    .track { flex: 1; width: 17px; padding: 142px 1px 0; }
    .thumb { height: 34px; background: #cdcdcd; border: 1px solid #b5b5b5; }
  `];
  render() {
    const panels: [string, Icon][] = [["Bookmarks", I.sBook], ["Pages", I.sPages], ["Layers", I.sLayers], ["Comments", I.sComment], ["Attachments", I.sClip], ["Digital signatures", I.sSign], ["Security", I.sLock], ["Sign", I.sPen]];
    return html`<div class="side">
        <button class="toggle" aria-label="Expand panel">${draw(I.expand)}</button>
        <div class="panel">${panels.map(([n, i]) => html`<button aria-label=${n}>${draw(i)}</button>`)}</div>
      </div>
      <div class="grip"><svg width="4" height="44"><path d="M.5 0v44M2.500 0v44" stroke="#555" stroke-dasharray="1 2"/></svg></div>
      <main class="page">
        <p class="green">section applies to the registration number SP18-BCS-02<u>9</u> because it ends at 9.</p>
        <p>Step 2: Develop a Create page through which Course Registration can be performed. You MUST<br />NOT forget that a course registration involves Students, Teachers, Courses and the Semester</p>
        <p>Step 3: When the Course Registration data is stored in the database, the Course Registration of all<br />students is shown on the next page. This page MUST also have a Previous button.</p>
        <p>Step 4: When the previous button is pressed, the Course Registration page should appear again.</p>
        <p class="center">*** Good Luck ***</p>
        <p class="green"><b><u>Group 02: For students whom registration numbers end at the digits 5 or 7. </u></b>For example, this</p>
      </main>
      <div class="gutter"></div>
      <div class="scroll">
        <div class="split"></div>
        <button aria-label="Scroll up">${draw(I.up)}</button>
        <div class="track"><div class="thumb"></div></div>
        <button aria-label="Scroll down">${draw(I.down)}</button>
      </div>`;
  }
}

@customElement("app-statusbar")
class StatusBar extends LitElement {
  static styles = [reset, css`
    .bar { display: grid; grid-template-columns: 1fr auto 1fr; align-items: center; height: 30px; background: #f0f0f0; font-size: 12px; color: #222; }
    .nav { grid-column: 2; display: flex; align-items: center; }
    .nav button { width: 24px; height: 24px; }
    .nav .jump { margin-left: 2px; }
    .combo { display: grid; width: 115px; height: 21px; margin: 0 0 0 3px; border: 1px solid #a3a3a3; background: #fff; align-items: center; }
    .combo > * { grid-area: 1 / 1; }
    .combo select { width: 113px; height: 19px; padding-left: 4px; color: #111; font-size: 13px; }
    .combo svg { justify-self: end; margin-right: 3px; pointer-events: none; }
    .zoom { display: flex; align-items: center; justify-content: flex-end; padding-right: 19px; }
    .view { width: 24px; height: 18px; margin-right: 2px; }
    .on { background: #c2d5f2; }
    .level { padding: 0 13px 0 12px; color: #444; font-size: 13px; }
    .small { height: 18px; margin-left: 3px; }
    .range { width: 92px; height: 16px; margin: 0 5px; background: linear-gradient(#222, #222) 45px 5px / 1px 7px no-repeat, linear-gradient(#333, #333) 0 8px / 100% 1px no-repeat; }
    .range::-webkit-slider-thumb { appearance: none; width: 4px; height: 8px; background: #1a1a1a; }
  `];
  render() {
    const b = (n: string, i: Icon, c = "") => html`<button class=${c} aria-label=${n}>${draw(i)}</button>`;
    return html`<footer class="bar">
      <div class="nav">
        ${b("First page", I.first)}${b("Previous page", I.back)}
        <div class="combo"><select aria-label="Page"><option>2 / 4</option></select>${draw(caret)}</div>
        ${b("Next page", I.fwd)}${b("Last page", I.last)}${b("Previous view", I.viewPrev, "jump")}${b("Next view", I.viewNext, "jump")}
      </div>
      <div class="zoom">
        ${b("Single page", I.single, "view")}${b("Continuous", I.cont, "view on")}${b("Facing", I.facing, "view")}${b("Continuous facing", I.contFacing, "view")}
        <span class="level">162.67%</span>
        ${b("Zoom presets", caret)}${b("Zoom out", I.minus, "small")}
        <input class="range" type="range" aria-label="Zoom" min="0" max="100" value="58" />
        ${b("Zoom in", I.plus)}
      </div>
    </footer>`;
  }
}

@customElement("app-taskbar")
class TaskBar extends LitElement {
  static styles = [reset, css`
    .bar { display: flex; height: 40px; background: linear-gradient(90deg, #222426, #2b2b2b 30%, #373533 38%, #2c2b2a 50%, #262626 62%, #26282a); color: #fff; font-family: "Noto Sans", sans-serif; }
    .start { width: 48px; }
    .search { display: flex; align-items: center; gap: 12px; width: 344px; padding: 0 12px; background: #f2f2f2; border: 1px solid #bdbdbd; color: #333; font-size: 14px; }
    .search input { flex: 1; min-width: 0; }
    ::placeholder { color: #444; opacity: 1; }
    .app { width: 49px; }
    .run { background: linear-gradient(#76b9ed, #76b9ed) 5px 38px / 40px 2px no-repeat; }
    .many { background: linear-gradient(90deg, #76b9ed 31px, #4f83ad 31px) 4px 38px / 40px 2px no-repeat; }
    .focus { background: linear-gradient(#565656 38px, #76b9ed 38px); }
    .stack { display: grid; justify-items: center; }
    .stack > * { grid-area: 1 / 1; }
    .tag { align-self: end; font-size: 7px; line-height: 8px; font-weight: 700; }
    .tray { flex: 1; display: flex; justify-content: flex-end; align-items: center; }
    .tray button { width: 24px; height: 40px; }
    .tray .wide { width: 30px; }
    .clock { width: 64px; text-align: center; font-size: 12px; line-height: 18px; white-space: nowrap; }
    .tray .note { width: 40px; }
    .desk { width: 5px; height: 40px; margin-left: 8px; border-left: 1px solid #777; }
  `];
  render() {
    const apps: [string, Icon, string][] = [["Cortana", I.cortana, ""], ["Task view", I.task, ""], ["Edge", I.edge, "many"], ["Sublime Text", I.sublime, ""], ["Store", I.store, ""], ["Mail", I.mailApp, ""], ["Chrome", I.chrome, "many"], ["File Explorer", I.explorer, "run"]];
    const t = (n: string, i: Icon, c = "") => html`<button class=${c} aria-label=${n}>${draw(i)}</button>`;
    return html`<div class="bar">
      <button class="start" aria-label="Start">${draw(I.win)}</button>
      <label class="search">${draw(I.search)}<input aria-label="Search" placeholder="Type here to search" /></label>
      ${apps.map(([n, i, c]) => t(n, i, "app " + c))}
      <button class="app focus" aria-label="Foxit Reader"><span class="stack">${draw(I.foxitBig)}<span class="tag">PDF</span></span></button>
      <div class="tray">
        ${t("Help", I.help, "wide")}${t("Hidden icons", I.chevron)}${t("OneDrive", I.cloud)}${t("Updates", I.sync)}${t("Battery", I.battery)}${t("Volume", I.volume)}
        <time class="clock">4:45 PM<br />1/10/2021</time>
        ${t("Notifications", I.note, "note")}
        <div class="desk"></div>
      </div>
    </div>`;
  }
}

@customElement("app-root")
class AppRoot extends LitElement {
  static styles = css`
    :host { display: flex; flex-direction: column; height: 100vh; overflow: hidden; background: #f0f0f0; }
  `;
  render() {
    return html`<app-titlebar></app-titlebar><app-menubar></app-menubar><app-ribbon></app-ribbon><app-doctabs></app-doctabs><app-document></app-document><app-statusbar></app-statusbar><app-taskbar></app-taskbar>`;
  }
}
